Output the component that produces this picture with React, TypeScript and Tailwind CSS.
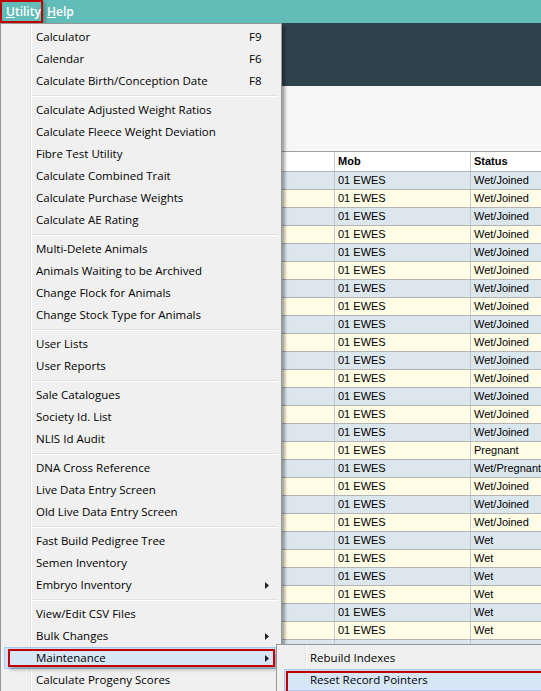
import React from "react";

type Item = { label: string; key?: string; sub?: boolean; active?: boolean };

const groups: Item[][] = [
  [
    { label: "Calculator", key: "F9" },
    { label: "Calendar", key: "F6" },
    { label: "Calculate Birth/Conception Date", key: "F8" },
  ],
  [
    { label: "Calculate Adjusted Weight Ratios" },
    { label: "Calculate Fleece Weight Deviation" },
    { label: "Fibre Test Utility" },
    { label: "Calculate Combined Trait" },
    { label: "Calculate Purchase Weights" },
    { label: "Calculate AE Rating" },
  ],
  [
    { label: "Multi-Delete Animals" },
    { label: "Animals Waiting to be Archived" },
    { label: "Change Flock for Animals" },
    { label: "Change Stock Type for Animals" },
  ],
  [{ label: "User Lists" }, { label: "User Reports" }],
  [{ label: "Sale Catalogues" }, { label: "Society Id. List" }, { label: "NLIS Id Audit" }],
  [
    { label: "DNA Cross Reference" },
    { label: "Live Data Entry Screen" },
    { label: "Old Live Data Entry Screen" },
  ],
  [
    { label: "Fast Build Pedigree Tree" },
    { label: "Semen Inventory" },
    { label: "Embryo Inventory", sub: true },
  ],
  [
    { label: "View/Edit CSV Files" },
    { label: "Bulk Changes", sub: true },
    { label: "Maintenance", sub: true, active: true },
    { label: "Calculate Progeny Scores" },
  ],
];

// rows that show before the submenu covers the grid; the last one is only a sliver
const statuses = [
  ...Array(15).fill("Wet/Joined"),
  "Pregnant",
  "Wet/Pregnant",
  "Wet/Joined",
  "Wet/Joined",
  "Wet/Joined",
  ...Array(6).fill("Wet"),
  "",
];

const menuFont = { fontFamily: "'Open Sans', 'Noto Sans', sans-serif" };

function Arrow() {
  return (
    <svg width="4" height="7" viewBox="0 0 4 7" className="absolute right-[12px] top-[8px]">
      <path d="M0 0 L4 3.5 L0 7 Z" fill="#222" />
    </svg>
  );
}

function MenuRow({ item }: { item: Item }) {
  return (
    <div className="relative h-[22px] flex items-center">
      {item.active && (
        <>
          <div className="absolute left-[3px] right-[4px] top-0 bottom-0 bg-[#d6e6f7] border border-[#a9c9ee]" />
          <div className="absolute left-[7px] right-[6px] top-[2px] bottom-[2px] border-2 border-[#c00000] shadow-[2px_2px_4px_rgba(0,0,0,0.35)]" />
        </>
      )}
      <span className="relative pl-[35px] text-[11.5px] text-black whitespace-nowrap">{item.label}</span>
      {item.key && (
        <span className="absolute left-[248px] text-[11.5px] text-black">{item.key}</span>
      )}
      {item.sub && <Arrow />}
    </div>
  );
}

export default function App() {
  return (
    <div className="relative w-[541px] h-[691px] overflow-hidden bg-[#f5f5f5]">
      {/* menu bar */}
      <div className="h-[23px] bg-[#62bdb8] flex items-center text-white text-[12px] font-semibold" style={menuFont}>
        <div className="relative h-[23px] w-[43px] flex items-center pl-[4px] border-2 border-[#c00000] shadow-[2px_2px_4px_rgba(0,0,0,0.3)]">
          <span><u>U</u>tility</span>
        </div>
        <span className="ml-[4px]"><u>H</u>elp</span>
      </div>

      {/* dark header */}
      <div className="h-[63px] bg-[#2f434c]" />
      <div className="h-[65px] bg-[#f7f7f7]" />

      {/* table */}
      <div className="border-t border-[#a0a0a0]" style={{ fontFamily: "'Liberation Sans', Arial, sans-serif" }}>
        <div className="grid grid-cols-[335px_136px_1fr] h-[19px] bg-white text-[11px] font-bold text-black">
          <div className="border-r border-[#c8c8c8]" />
          <div className="border-r border-[#c8c8c8] pl-[3px] flex items-center">Mob</div>
          <div className="pl-[3px] flex items-center">Status</div>
        </div>
        {statuses.map((s, i) => (
          <div
            key={i}
            className={`grid grid-cols-[335px_136px_1fr] h-[18px] border-t border-[#b4b4b4] text-[11px] text-black ${
              i % 2 === 0 ? "bg-[#dce6ef]" : "bg-[#fffde5]"
            }`}
          >
            <div className="border-r border-[#c8c8c8]" />
            <div className="border-r border-[#c8c8c8] pl-[3px] flex items-center">{s ? "01 EWES" : ""}</div>
            <div className="pl-[3px] flex items-center">{s}</div>
          </div>
        ))}
      </div>

      {/* utility dropdown */}
      <div
        className="absolute left-0 top-[23px] w-[282px] h-[700px] bg-[#f0f0f0] border border-[#979797] pt-[2px] shadow-[3px_3px_3px_rgba(0,0,0,0.35)]"
        style={menuFont}
      >
        <div className="absolute left-[29px] top-0 bottom-0 w-px bg-[#e2e3e3]" />
        <div className="absolute left-[30px] top-0 bottom-0 w-px bg-white" />
        {groups.map((g, gi) => (
          <div key={gi}>
            {gi > 0 && (
              <div className="h-[7px] flex flex-col justify-center pl-[31px] pr-[3px]">
                <div className="h-px bg-[#e0e0e0]" />
                <div className="h-px bg-white" />
              </div>
            )}
            {g.map((it) => (
              <MenuRow key={it.label} item={it} />
            ))}
          </div>
        ))}
      </div>

      {/* maintenance submenu */}
      <div
        className="absolute left-[276px] top-[644px] w-[280px] h-[60px] bg-[#f0f0f0] border border-[#979797] pt-[2px] shadow-[3px_3px_3px_rgba(0,0,0,0.35)]"
        style={menuFont}
      >
        <div className="absolute left-[28px] top-0 bottom-0 w-px bg-[#e2e3e3]" />
        <div className="absolute left-[29px] top-0 bottom-0 w-px bg-white" />
        <div className="relative h-[22px] flex items-center pl-[33px] text-[11.5px] text-black">Rebuild Indexes</div>
        <div className="relative h-[22px] flex items-center">
          <div className="absolute left-[7px] right-0 top-0 bottom-0 bg-[#d6e6f7] border border-[#a9c9ee]" />
          <div className="absolute left-[9px] right-[6px] top-[2px] bottom-[-2px] border-2 border-[#c00000] shadow-[2px_2px_4px_rgba(0,0,0,0.35)]" />
          <span className="relative pl-[33px] text-[11.5px] text-black">Reset Record Pointers</span>
        </div>
      </div>
    </div>
  );
}
